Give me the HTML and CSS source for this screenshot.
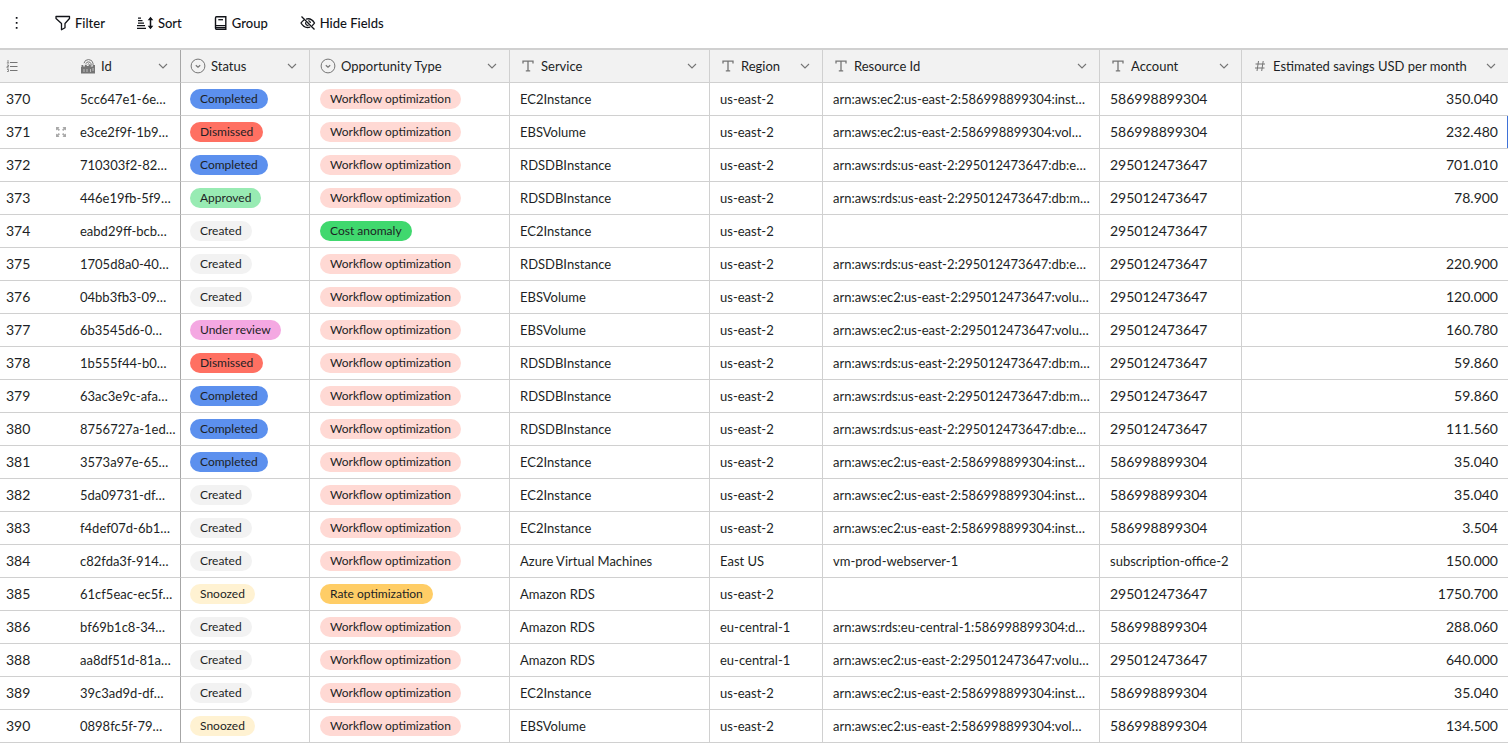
FILE: index.html
```html
<!DOCTYPE html>
<html lang="en">
<head>
<meta charset="utf-8">
<title>Opportunities</title>
<link rel="stylesheet" href="styles.css">
</head>
<body>
<svg class="defs" aria-hidden="true">
  <symbol id="chev" viewBox="0 0 10 6"><path d="M1 1l4 4 4-4" fill="none" stroke="currentColor" stroke-width="1.1"/></symbol>
  <symbol id="text" viewBox="0 0 12 12"><path d="M1 3.6V1.2h10v2.400M6 1.200v9.600M3.800 10.800h4.400" fill="none" stroke="currentColor" stroke-width="1.300"/></symbol>
  <symbol id="select" viewBox="0 0 16 16"><circle cx="8" cy="8" r="6.900" fill="none" stroke="currentColor"/><path d="M5.800 7.200L8 9.200l2.200-2" fill="none" stroke="currentColor" stroke-width="1.200"/></symbol>
</svg>
<header class="toolbar">
  <button class="tool more" aria-label="More options"><svg width="4" height="12" viewBox="0 0 4 12"><path d="M.8 0h1.700v1.800H.8zM.8 5h1.700v1.800H.8zM.8 10h1.700v1.800H.8z" fill="currentColor"/></svg></button>
  <button class="tool"><svg width="16" height="16" viewBox="0 0 16 16"><path d="M1 1.500h13.500v2L10 8.500v4.200l-3.500 2V8.500L1 3.500z" fill="none" stroke="currentColor" stroke-width="1.300" stroke-linejoin="round"/></svg>Filter</button>
  <button class="tool"><svg width="17" height="16" viewBox="0 0 17 16"><path d="M1 3.200h3M1 5.700h4.500M1 8.200h6M0 10.700h8M0 13.300h9" fill="none" stroke="currentColor" stroke-width="1.300"/><path d="M13.500 3v10" stroke="currentColor" stroke-width="1.500"/><path d="M10.700 5.200L13.500 1.800l2.800 3.400zM10.700 10.800l2.800 3.400 2.800-3.400z" fill="currentColor"/></svg>Sort</button>
  <button class="tool"><svg width="14" height="16" viewBox="0 0 14 16"><path d="M2.500 1.700h9.300v12.600H2.700a1.200 1.200 0 0 1-1.200-1.200V2.900q0-1.200 1-1.200z" fill="none" stroke="currentColor" stroke-width="1.400"/><path d="M1.500 10.600h10.500M1.500 12.600h10.500" stroke="currentColor" stroke-width="1.100"/><path d="M4.300 4.700h4.700" stroke="currentColor" stroke-width="1.300"/></svg>Group</button>
  <button class="tool"><svg width="16" height="16" viewBox="0 0 16 16" fill="none" stroke="currentColor" stroke-width="1.300"><path d="M1.500 1.500l13 13M6 4.100C10.500 2.800 13 5.500 14.500 8c-.6 1-1.400 1.900-2.400 2.700M4 5C2.700 5.800 1.700 6.900 1 8c2 3.500 5.500 5.200 9.200 4.100M8.300 5.700A2.500 2.500 0 0 1 10.400 8M5.700 7.200A2.500 2.500 0 0 0 8.500 10.400"/></svg>Hide Fields</button>
</header>
<main>
<table class="grid">
  <colgroup><col class="c-num"><col class="c-id"><col class="c-status"><col class="c-type"><col class="c-service"><col class="c-region"><col class="c-resource"><col class="c-account"><col></colgroup>
  <thead>
    <tr>
      <th aria-label="Row number"><div class="head"><svg width="12" height="12" viewBox="0 0 12 12" fill="none" stroke="currentColor"><path d="M4 2.500h7.500M4 6.500h7.500M4 10.500h7.500"/><path d="M2 0v3M.8 3h2.400M1 5h1.500v1.500H1V8h1.800M1 9.500h1.500v2H1" stroke-width=".8"/></svg></div></th>
      <th class="id"><div class="head"><svg width="16" height="16" viewBox="0 0 16 16"><path d="M1.500 7h1.800v1.500h1.500V6.700h2V8h2V6.700h2V8.500h2V7H15v8.500H1V9h.5z" fill="currentColor"/><path d="M4 5.200a4.600 4.600 0 0 1 9 0v2M5.800 5.800a2.800 2.800 0 0 1 5.300 0v2M7.600 6.500a1 1 0 0 1 1.700 0v2" fill="none" stroke="currentColor" stroke-width="1"/><path d="M4 14v-3M7 14v-3M10.500 14v-3M13 13v-3" stroke="#f2f2f2" stroke-width=".6"/></svg><span>Id</span><svg class="chev"><use href="#chev"/></svg></div></th>
      <th><div class="head"><svg class="sel"><use href="#select"/></svg><span>Status</span><svg class="chev"><use href="#chev"/></svg></div></th>
      <th><div class="head"><svg class="sel"><use href="#select"/></svg><span>Opportunity Type</span><svg class="chev"><use href="#chev"/></svg></div></th>
      <th><div class="head"><svg class="txt"><use href="#text"/></svg><span>Service</span><svg class="chev"><use href="#chev"/></svg></div></th>
      <th><div class="head"><svg class="txt"><use href="#text"/></svg><span>Region</span><svg class="chev"><use href="#chev"/></svg></div></th>
      <th><div class="head"><svg class="txt"><use href="#text"/></svg><span>Resource Id</span><svg class="chev"><use href="#chev"/></svg></div></th>
      <th><div class="head"><svg class="txt"><use href="#text"/></svg><span>Account</span><svg class="chev"><use href="#chev"/></svg></div></th>
      <th><div class="head"><svg class="txt" viewBox="0 0 12 12"><path d="M4.500 1L3 11M9.200 1L7.700 11M1.500 4h9.500M1 8h9.500" fill="none" stroke="currentColor"/></svg><span>Estimated savings USD per month</span><svg class="chev"><use href="#chev"/></svg></div></th>
    </tr>
  </thead>
  <tbody>
    <tr><td>370</td><td>5cc647e1-6e…</td><td><span class="tag completed">Completed</span></td><td><span class="tag workflow">Workflow optimization</span></td><td>EC2Instance</td><td>us-east-2</td><td>arn:aws:ec2:us-east-2:586998899304:inst…</td><td class="digits">586998899304</td><td>350.040</td></tr>
    <tr class="hovered"><td><div class="number">371<button class="expand" aria-label="Expand record"><svg width="12" height="12" viewBox="0 0 12 12"><path d="M1 1h3.500L3.400 2.200 5 3.800 3.800 5 2.200 3.400 1 4.500zM11 1v3.500L9.800 3.400 8.200 5 7 3.800l1.600-1.600L7.500 1zM1 11V7.500l1.200 1.100L3.800 7 5 8.200 3.400 9.800 4.500 11zM11 11H7.500l1.100-1.200L7 8.200 8.200 7l1.600 1.600L11 7.500z" fill="currentColor"/></svg></button></div></td><td>e3ce2f9f-1b9…</td><td><span class="tag dismissed">Dismissed</span></td><td><span class="tag workflow">Workflow optimization</span></td><td>EBSVolume</td><td>us-east-2</td><td>arn:aws:ec2:us-east-2:586998899304:vol…</td><td class="digits">586998899304</td><td>232.480</td></tr>
    <tr><td>372</td><td>710303f2-82…</td><td><span class="tag completed">Completed</span></td><td><span class="tag workflow">Workflow optimization</span></td><td>RDSDBInstance</td><td>us-east-2</td><td>arn:aws:rds:us-east-2:295012473647:db:e…</td><td class="digits">295012473647</td><td>701.010</td></tr>
    <tr><td>373</td><td>446e19fb-5f9…</td><td><span class="tag approved">Approved</span></td><td><span class="tag workflow">Workflow optimization</span></td><td>RDSDBInstance</td><td>us-east-2</td><td>arn:aws:rds:us-east-2:295012473647:db:m…</td><td class="digits">295012473647</td><td>78.900</td></tr>
    <tr><td>374</td><td>eabd29ff-bcb…</td><td><span class="tag created">Created</span></td><td><span class="tag anomaly">Cost anomaly</span></td><td>EC2Instance</td><td>us-east-2</td><td></td><td class="digits">295012473647</td><td></td></tr>
    <tr><td>375</td><td>1705d8a0-40…</td><td><span class="tag created">Created</span></td><td><span class="tag workflow">Workflow optimization</span></td><td>RDSDBInstance</td><td>us-east-2</td><td>arn:aws:rds:us-east-2:295012473647:db:e…</td><td class="digits">295012473647</td><td>220.900</td></tr>
    <tr><td>376</td><td>04bb3fb3-09…</td><td><span class="tag created">Created</span></td><td><span class="tag workflow">Workflow optimization</span></td><td>EBSVolume</td><td>us-east-2</td><td>arn:aws:ec2:us-east-2:295012473647:volu…</td><td class="digits">295012473647</td><td>120.000</td></tr>
    <tr><td>377</td><td>6b3545d6-0…</td><td><span class="tag review">Under review</span></td><td><span class="tag workflow">Workflow optimization</span></td><td>EBSVolume</td><td>us-east-2</td><td>arn:aws:ec2:us-east-2:295012473647:volu…</td><td class="digits">295012473647</td><td>160.780</td></tr>
    <tr><td>378</td><td>1b555f44-b0…</td><td><span class="tag dismissed">Dismissed</span></td><td><span class="tag workflow">Workflow optimization</span></td><td>RDSDBInstance</td><td>us-east-2</td><td>arn:aws:rds:us-east-2:295012473647:db:m…</td><td class="digits">295012473647</td><td>59.860</td></tr>
    <tr><td>379</td><td>63ac3e9c-afa…</td><td><span class="tag completed">Completed</span></td><td><span class="tag workflow">Workflow optimization</span></td><td>RDSDBInstance</td><td>us-east-2</td><td>arn:aws:rds:us-east-2:295012473647:db:m…</td><td class="digits">295012473647</td><td>59.860</td></tr>
    <tr><td>380</td><td>8756727a-1ed…</td><td><span class="tag completed">Completed</span></td><td><span class="tag workflow">Workflow optimization</span></td><td>RDSDBInstance</td><td>us-east-2</td><td>arn:aws:rds:us-east-2:295012473647:db:e…</td><td class="digits">295012473647</td><td>111.560</td></tr>
    <tr><td>381</td><td>3573a97e-65…</td><td><span class="tag completed">Completed</span></td><td><span class="tag workflow">Workflow optimization</span></td><td>EC2Instance</td><td>us-east-2</td><td>arn:aws:ec2:us-east-2:586998899304:inst…</td><td class="digits">586998899304</td><td>35.040</td></tr>
    <tr><td>382</td><td>5da09731-df…</td><td><span class="tag created">Created</span></td><td><span class="tag workflow">Workflow optimization</span></td><td>EC2Instance</td><td>us-east-2</td><td>arn:aws:ec2:us-east-2:586998899304:inst…</td><td class="digits">586998899304</td><td>35.040</td></tr>
    <tr><td>383</td><td>f4def07d-6b1…</td><td><span class="tag created">Created</span></td><td><span class="tag workflow">Workflow optimization</span></td><td>EC2Instance</td><td>us-east-2</td><td>arn:aws:ec2:us-east-2:586998899304:inst…</td><td class="digits">586998899304</td><td>3.504</td></tr>
    <tr><td>384</td><td>c82fda3f-914…</td><td><span class="tag created">Created</span></td><td><span class="tag workflow">Workflow optimization</span></td><td>Azure Virtual Machines</td><td>East US</td><td>vm-prod-webserver-1</td><td>subscription-office-2</td><td>150.000</td></tr>
    <tr><td>385</td><td>61cf5eac-ec5f…</td><td><span class="tag snoozed">Snoozed</span></td><td><span class="tag rate">Rate optimization</span></td><td>Amazon RDS</td><td>us-east-2</td><td></td><td class="digits">295012473647</td><td>1750.700</td></tr>
    <tr><td>386</td><td>bf69b1c8-34…</td><td><span class="tag created">Created</span></td><td><span class="tag workflow">Workflow optimization</span></td><td>Amazon RDS</td><td>eu-central-1</td><td>arn:aws:rds:eu-central-1:586998899304:d…</td><td class="digits">586998899304</td><td>288.060</td></tr>
    <tr><td>388</td><td>aa8df51d-81a…</td><td><span class="tag created">Created</span></td><td><span class="tag workflow">Workflow optimization</span></td><td>Amazon RDS</td><td>eu-central-1</td><td>arn:aws:ec2:us-east-2:295012473647:volu…</td><td class="digits">295012473647</td><td>640.000</td></tr>
    <tr><td>389</td><td>39c3ad9d-df…</td><td><span class="tag created">Created</span></td><td><span class="tag workflow">Workflow optimization</span></td><td>EC2Instance</td><td>us-east-2</td><td>arn:aws:ec2:us-east-2:586998899304:inst…</td><td class="digits">586998899304</td><td>35.040</td></tr>
    <tr><td>390</td><td>0898fc5f-79…</td><td><span class="tag snoozed">Snoozed</span></td><td><span class="tag workflow">Workflow optimization</span></td><td>EBSVolume</td><td>us-east-2</td><td>arn:aws:ec2:us-east-2:586998899304:vol…</td><td class="digits">586998899304</td><td>134.500</td></tr>
  </tbody>
</table>
</main>
</body>
</html>
```
FILE: styles.css
```css
* { box-sizing: border-box; }
body { margin: 0; background: #fff; color: #1d1f25; font: 13px/20px Lato, "Open Sans", sans-serif; }
button { font: inherit; color: inherit; background: none; border: 0; padding: 0; margin: 0; }
svg { flex: none; display: block; }
.defs { position: absolute; width: 0; height: 0; }
.toolbar { display: flex; align-items: center; gap: 32px; height: 48px; padding: 0 15px 2px; font-weight: 500; color: #111318; }
.tool { display: flex; align-items: center; gap: 4px; white-space: nowrap; }
.more { margin-right: 4px; }
.grid { width: 100%; table-layout: fixed; border-spacing: 0; border-top: 2px solid #d0d0d0; }
.c-num { width: 70px; }
.c-id { width: 111px; }
.c-status { width: 129px; }
.c-type, .c-service { width: 200px; }
.c-region { width: 113px; }
.c-resource { width: 277px; }
.c-account { width: 142px; }
.grid th, .grid td { height: 33px; padding: 0 10px; border-right: 1px solid #d0d0d0; border-bottom: 1px solid #d0d0d0; text-align: left; font-weight: 400; white-space: nowrap; overflow: hidden; }
.grid th { background: #f2f2f2; color: #1d1f25; }
.grid th:first-child, .grid td:first-child { padding: 0 0 0 6px; border-right: 0; }
.grid th:nth-child(2), .grid td:nth-child(2) { border-right-color: #a6a6a6; }
.grid th:nth-child(3), .grid td:nth-child(3) { padding-left: 9px; }
.grid td:first-child, .grid .digits, .grid td:last-child { font-size: 14px; }
.grid td:last-child { text-align: right; }
.grid th:last-child, .grid td:last-child { border-right: 0; }
.grid .hovered td:last-child { box-shadow: inset -1px 0 #3f72d8; }
.head { display: flex; align-items: center; gap: 5px; }
.head svg { color: #757575; }
.head span { flex: 1; }
.sel { width: 16px; height: 16px; }
.txt { width: 12px; height: 12px; margin: 0 2px; }
.head .chev { width: 10px; height: 6px; margin-right: 2px; }
.number { display: flex; align-items: center; justify-content: space-between; padding-right: 3px; }
.expand { color: #a8a8a8; }
.tag { display: block; width: fit-content; height: 20px; padding: 0 10px; border-radius: 10px; font-size: 12px; line-height: 20px; }
.completed { background: #5c90ee; }
.dismissed { background: #ff7062; }
.approved { background: #98ebb3; }
.created { background: #f2f2f2; }
.review { background: #f4a8e2; }
.snoozed { background: #fff2d2; }
.workflow { background: #ffd9d4; }
.anomaly { background: #40d86e; }
.rate { background: #ffcd66; }
```
